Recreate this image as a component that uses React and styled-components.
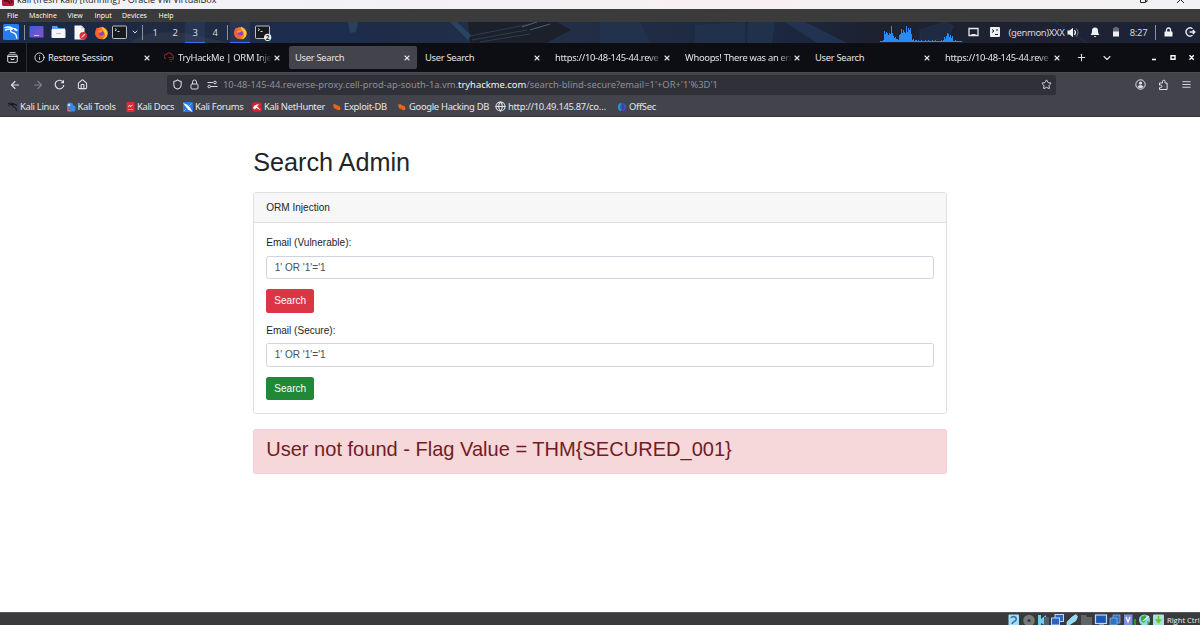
import styled, { createGlobalStyle } from 'styled-components'
import { LuInfo, LuX, LuArrowLeft, LuArrowRight, LuHouse, LuShield, LuStar, LuMenu, LuChevronDown, LuPlus, LuGlobe } from 'react-icons/lu'

const GlobalStyle = createGlobalStyle`
  * { box-sizing: border-box; }
  body {
    margin: 0;
    background: #fff;
    overflow: hidden;
  }
  svg { display: block; flex: none; }
`

const Desktop = styled.div`
  width: 1200px;
  height: 625px;
  display: flex;
  flex-direction: column;
  overflow: hidden;
  font-family: 'Noto Sans', sans-serif;
  font-size: 9px;
  white-space: nowrap;
`

/* Virtual machine window */

const TitleBar = styled.div`
  height: 9px;
  flex: none;
  display: flex;
  align-items: flex-start;
  overflow: hidden;
  padding-left: 2px;
  background: linear-gradient(90deg, #f0f3fa, #f7eff3 60%, #f3f1f5);
  color: #222;
`

const TitleText = styled.span`
  margin: -7px 0 0 3px;
  font-family: 'Open Sans', sans-serif;
  font-size: 9px;
  line-height: 14px;
`

const WindowControls = styled.svg`
  margin-left: auto;
`

const MenuBar = styled.div`
  height: 13px;
  flex: none;
  display: flex;
  background: #3b3b3b;
  color: #fff;
  font-family: 'Open Sans', sans-serif;
  font-size: 7px;
  line-height: 13px;
  padding-left: 7px;
`

const MenuItem = styled.span`
  width: ${(props) => props.$width}px;
`

const StatusBar = styled.div`
  height: 13px;
  flex: none;
  display: flex;
  justify-content: flex-end;
  background: #3a3a3d;
  color: #f2f2f2;
  font-family: 'Open Sans', sans-serif;
  font-size: 7.6px;
  line-height: 15px;
  border-top: 1px solid #55555a;
`

const HostKey = styled.span`
  width: 33px;
`

/* Xfce panel */

const Panel = styled.div`
  height: 21px;
  flex: none;
  display: flex;
  align-items: center;
  position: relative;
  background: #1e2436;
  color: #d3d7df;
`

const Wallpaper = styled.svg`
  position: absolute;
  inset: 0;
`

const PanelItem = styled.div`
  position: relative;
  width: ${(props) => props.$width}px;
  height: 21px;
  flex: none;
  display: flex;
  align-items: center;
  justify-content: center;
  background: ${(props) => (props.$active ? 'rgba(60, 85, 130, 0.25)' : 'transparent')};
  border-bottom: 1px solid ${(props) => (props.$active ? '#3575e8' : 'transparent')};
`

const PanelLine = styled.div`
  position: relative;
  width: 1px;
  height: 15px;
  flex: none;
  background: #8c909b;
`

const Spacer = styled.div`
  flex: 1;
`

const PanelText = styled.span`
  font-size: 9.5px;
  letter-spacing: ${(props) => props.$spacing || '-0.3px'};
`

/* Browser */

const TabStrip = styled.div`
  height: 29px;
  flex: none;
  display: flex;
  align-items: center;
  background: #0d0e13;
  color: #e4e4e8;
`

const TabOverview = styled.div`
  width: 27px;
  height: 29px;
  display: flex;
  align-items: center;
  padding-left: 7px;
  border-right: 1px solid #2b2c31;
  margin-right: 2px;
`

const Tab = styled.div`
  width: 128px;
  height: 23px;
  margin-right: 2px;
  flex: none;
  display: flex;
  align-items: center;
  padding: 0 6px 0 5px;
  border-radius: 2px;
  background: ${(props) => (props.$active ? '#42434b' : 'transparent')};
`

const TabIcon = styled.span`
  width: 13px;
  flex: none;
`

const TabLabel = styled.span`
  flex: 1;
  overflow: hidden;
  margin-right: 1px;
  padding-left: 1px;
  font-size: 9.4px;
  letter-spacing: -0.3px;
  mask-image: ${(props) => (props.$fade ? 'linear-gradient(90deg, #000 calc(100% - 14px), transparent)' : 'none')};
`

const TabAction = styled.div`
  width: ${(props) => props.$width}px;
  display: flex;
  justify-content: center;
`

const NavBar = styled.div`
  height: 26px;
  flex: none;
  display: flex;
  align-items: center;
  padding-bottom: 2px;
  background: #42434b;
  border-top: 1px solid #4a4b52;
  color: #e2e2e6;
`

const NavButton = styled.div`
  width: ${(props) => props.$width || 22.4}px;
  flex: none;
  display: flex;
  justify-content: center;
  opacity: ${(props) => (props.$disabled ? 0.4 : 1)};
`

const NavButtons = styled.div`
  width: 167px;
  padding-left: 4px;
  display: flex;
  align-items: center;
`

const AddressBar = styled.div`
  width: 889px;
  height: 20px;
  margin-right: 73px;
  flex: none;
  display: flex;
  align-items: center;
  padding: 0 4px 0 5px;
  background: #303138;
  border-radius: 2px;
`

const Address = styled.span`
  flex: 1;
  padding-left: 4px;
  color: #8e8e96;
  font-size: 9.4px;

  b {
    font-weight: 400;
    color: #f4f4f8;
  }
`

const Bookmarks = styled.div`
  height: 19px;
  flex: none;
  display: flex;
  align-items: center;
  padding: 0 0 1px 7px;
  background: #42434b;
  border-bottom: 1px solid #35363c;
  color: #e6e6ea;
`

const Bookmark = styled.div`
  width: ${(props) => props.$width}px;
  flex: none;
  display: flex;
  align-items: center;
  gap: 2px;
  font-size: 9.4px;
  letter-spacing: -0.3px;
`

/* Search page */

const Page = styled.main`
  flex: 1;
  width: 693.6px;
  margin: 0 auto;
  padding-top: 29.5px;
  font-family: 'Liberation Sans', Arial, sans-serif;
  font-size: 10.05px;
  line-height: 15px;
  color: #212529;
`

const PageTitle = styled.h1`
  margin: 0 0 15.5px;
  font-size: 25.2px;
  line-height: 30px;
  font-weight: 400;
`

const Card = styled.section`
  height: 221.5px;
  border: 1px solid #dfdfdf;
  border-radius: 2.5px;
`

const CardHeader = styled.div`
  height: 30px;
  padding: 7px 12px;
  background: #f7f7f7;
  border-bottom: 1px solid #dfdfdf;
`

const CardBody = styled.form`
  padding: 12px;
`

const Field = styled.div`
  margin-bottom: 10px;
`

const Label = styled.label`
  display: block;
  height: 16px;
  margin-bottom: 4.5px;
  line-height: 16.5px;
`

const Input = styled.input`
  display: block;
  width: 100%;
  height: 23.5px;
  padding: 0 7.5px;
  margin-bottom: 10px;
  border: 1px solid #ced4da;
  border-radius: 2.5px;
  color: #495057;
  font: inherit;
  outline: none;
`

const Button = styled.button`
  display: block;
  width: 48px;
  height: 23.5px;
  padding: 0;
  border: 0;
  border-radius: 2.5px;
  background: ${(props) => (props.$secure ? '#218838' : '#dc3545')};
  color: #fff;
  font: inherit;
`

const Alert = styled.div`
  height: 45px;
  margin-top: 15.5px;
  padding: 7px 12px 0;
  border: 1px solid #f4ced2;
  border-radius: 2.5px;
  background: #f6d7da;
  color: #721c24;

  h2 {
    margin: 0;
    font-size: 20.06px;
    line-height: 24px;
    font-weight: 400;
  }
`

const KaliDragon = ({ size, color = '#fff', bg = 'none' }) => (
  <svg width={size} height={size} viewBox="0 0 16 16" fill="none">
    <rect width="16" height="16" rx="1.5" fill={bg} />
    <path d="M2 3.600c2.600-.9 5.400-.7 7.400.7M2.400 6c2-1 4.500-1.200 6.600-.7M9 4.200c-2.400 1.800-1.600 4 1 4.400 2.400.4 3.400 2 3.800 5.400M10.200 4.400c1.600 0 2.600.5 3.600 2M11.600 5.600l2.400.6" stroke={color} strokeWidth="1.400" strokeLinecap="round" />
  </svg>
)

const Firefox = () => (
  <svg width="15" height="15" viewBox="0 0 16 16">
    <circle cx="8" cy="8.700" r="6.600" fill="#ff7a1c" />
    <path d="M9 1.200c.4 2 4 3 5 5.600 1.300 4-1 8-5 8.500 3-2 3.600-5 2-7.800C9.700 5.600 8 4 9 1.200z" fill="#ffc93b" />
    <path d="M2 4.600 3.300 2.600l1.200 1.700 2.700.3L5 8l1 4 4.500 1.700C6 16.400 1.500 13 1.400 9z" fill="#f9603a" />
    <circle cx="7.900" cy="8.800" r="2.700" fill="#8547b8" />
    <path d="M4.600 6.300c2-.9 3.500-.4 4.700.6L7 8l-2 .3z" fill="#ff9b2b" />
  </svg>
)

const Terminal = ({ count }) => (
  <svg width="18" height="17" viewBox="0 0 18 17">
    <rect x="1.500" y="2" width="14" height="12.500" rx=".8" fill="#17191d" stroke="#bcbfc4" />
    <path d="M4 4.500l1.500 1.200L4 7M6.500 7.500h2" stroke="#f5f5f5" fill="none" strokeWidth=".9" />
    {count && (
      <>
        <circle cx="13.700" cy="13.300" r="3.600" fill="#f3f3f5" />
        <text x="13.700" y="15.600" fontSize="6.500" fontWeight="700" textAnchor="middle" fill="#222">{count}</text>
      </>
    )}
  </svg>
)

const Desktops = () => (
  <svg width="15" height="12" viewBox="0 0 15 12">
    <defs>
      <linearGradient id="desk" x1="0" x2="1" y2="1">
        <stop stopColor="#3a5fd0" />
        <stop offset="1" stopColor="#8a50c8" />
      </linearGradient>
    </defs>
    <rect x=".5" width="14" height="11.500" rx=".8" fill="url(#desk)" />
    <path d="M5 9.500h5" stroke="#c9c4f4" />
  </svg>
)

const Folder = () => (
  <svg width="15" height="14" viewBox="0 0 15 14">
    <path d="M1 1h5l1.500 2H14v4H1z" fill="#5c9df0" />
    <rect x=".5" y="4" width="14" height="9" rx="1" fill="#f4f6fa" />
    <path d="M5 8.500h5" stroke="#b7bfcc" />
  </svg>
)

const TextDocument = () => (
  <svg width="15" height="15" viewBox="0 0 15 15">
    <path d="M1.500.5h7l3 3v11h-10z" fill="#f6f6f6" />
    <path d="M8.500.5v3h3" fill="#bfc3c9" />
    <circle cx="10.300" cy="10.800" r="3.800" fill="#d6303a" />
    <path d="M8.500 12.500l3.500-3.500" stroke="#f3c7c9" strokeWidth="1.100" />
  </svg>
)

// cpu history, one bar per sample
const samples = [1, 1, 1, 2, 11, 8, 10, 9, 7, 9, 8, 16, 9, 6, 4, 5, 3, 3, 2, 7, 8, 13, 9, 12, 10, 9, 16, 10, 14, 12, 14, 8, 2, 3, 1, 2, 2, 1, 2, 1, 1, 2, 1, 1, 1, 2, 1, 1, 2, 1, 1, 1, 2, 1, 1, 2, 1, 1, 1, 1, 1, 2, 1, 2, 5, 3, 6, 9, 8, 5, 7, 4, 6, 1, 1, 2, 1, 1, 1, 1, 1, 1]

const CpuGraph = () => (
  <svg width="84" height="20" viewBox="0 0 84 20" shapeRendering="crispEdges">
    {samples.map((value, i) => (
      <rect key={i} x={i} y={20 - value} width="1" height={value} fill="#268bf5" />
    ))}
  </svg>
)

const PanelWallpaper = () => (
  <Wallpaper width="1200" height="21" viewBox="0 0 1200 21">
    <defs>
      <linearGradient id="wall">
        <stop stopColor="#1c2743" />
        <stop offset=".15" stopColor="#202b43" />
        <stop offset=".3" stopColor="#1e2c49" />
        <stop offset=".45" stopColor="#222f47" />
        <stop offset=".65" stopColor="#1c2840" />
        <stop offset=".73" stopColor="#1d2130" />
        <stop offset="1" stopColor="#1d2337" />
      </linearGradient>
    </defs>
    <rect width="1200" height="21" fill="url(#wall)" />
    <path d="M0 0h145l-20 12L108 21H0z" fill="#1b2949" opacity=".6" />
    <path d="M130 21c10-10 30-12 55-10l45 10z" fill="#2b3447" />
    <path d="M275 0h75v10l22 11H262z" fill="#1c2d4e" />
    <path d="M348 0h10l-2 10-6 1z" fill="#355379" opacity=".5" />
    <path d="M468 0h89l14 8-25 13H470z" fill="#1b202b" />
    <path d="M450 0l18 18 3-5L457 0z" fill="#294363" />
    <path d="M470 14l60-12M472 18l55-10M480 20l50-8" stroke="#33455d" strokeWidth=".8" />
    <path d="M522 5l15-5M530 8l20-6" stroke="#4b6078" />
    <path d="M600 0h40l10 21h-50zM695 3l50-3v21h-50zM748 0h27l-3 21h-25z" fill="#243652" opacity=".65" />
    <path d="M785 0h20l42 21h-30z" fill="#233b5c" opacity=".65" />
    <path d="M920 8l25-8 8 4-5 12-28 4zM1055 0l32 21" fill="#1f3452" stroke="#2d405b" opacity=".5" />
  </Wallpaper>
)

const tabs = [
  { label: 'Restore Session', icon: <LuInfo size={11} /> },
  {
    label: 'TryHackMe | ORM Injec',
    fade: true,
    icon: (
      <svg width="11" height="11" viewBox="0 0 11 11">
        <path d="M2 6.500a2 2 0 0 1 .5-4A3 3 0 0 1 8 3a2 2 0 0 1 .5 3.700" fill="none" stroke="#8d1d26" strokeWidth="1.200" />
        <path d="M4 5.500h5M5 7.500h5M6 9.500h2" stroke="#6f1a22" />
      </svg>
    ),
  },
  { label: 'User Search', active: true },
  { label: 'User Search' },
  { label: 'https://10-48-145-44.reve', fade: true },
  { label: 'Whoops! There was an erro', fade: true },
  { label: 'User Search' },
  { label: 'https://10-48-145-44.reve', fade: true },
]

const ToolsIcon = () => (
  <svg width="10" height="10" viewBox="0 0 10 10">
    <circle cx="4" cy="3.800" r="3.200" fill="#4a80e8" />
    <circle cx="3" cy="3" r="1.300" fill="#c2dcff" />
    <rect x="4" y="3.500" width="5.500" height="6" rx="1.500" fill="#3c86ee" />
    <path d="M1 5.500l4.500 4H1.500z" fill="#ef6d67" />
  </svg>
)

const DocsIcon = () => (
  <svg width="9" height="10" viewBox="0 0 9 10">
    <rect x=".5" width="8" height="10" rx=".8" fill="#e12b33" />
    <path d="M2.500 5l1-2 1 1.500 2-1.500" stroke="#fff" fill="none" strokeWidth=".8" />
    <path d="M2 7.500h5" stroke="#f7a9ac" strokeWidth=".8" />
  </svg>
)

const ForumsIcon = () => (
  <svg width="10" height="10" viewBox="0 0 10 10">
    <rect width="10" height="10" rx=".6" fill="#2978df" />
    <path d="M0 1l4 1.500 3 3L9.500 10 5 7.500 3 5z" fill="#fff" />
    <path d="M8.500 1.500L6 4M3 7L1 9" stroke="#8fc0f7" strokeWidth=".8" />
  </svg>
)

const NetHunterIcon = () => (
  <svg width="10" height="10" viewBox="0 0 10 10">
    <rect x=".3" y=".3" width="9.400" height="9.400" rx="2" fill="#d8232e" />
    <path d="M1 6c1-3 3.500-4 6.500-3.500L5 4l4 4.500L4.500 6 2.500 7.500z" fill="#fff" />
  </svg>
)

const ExploitIcon = () => (
  <svg width="10" height="10" viewBox="0 0 10 10">
    <path d="M1 2.500l2.500-.3 1.700 1.300 2 .6 1.300 2-.5 2-2 .2-2-1.300L2 6z" fill="#f06a1d" />
    <path d="M2 3.500l5 4M5 3l-1 4M7 4L5.500 8" stroke="#d9550f" strokeWidth=".6" />
  </svg>
)

const OffSecIcon = () => (
  <svg width="10" height="10" viewBox="0 0 10 10">
    <path d="M4.500 1C1 .8-.2 5 2 8.500l2.500.5z" fill="#2791e6" />
    <path d="M5.500 1C9 .8 10.200 5 8 8.500L5.500 9z" fill="#434bd7" />
    <path d="M4 3L3.500 7M6 3l.5 4" stroke="#203b87" strokeWidth=".7" />
  </svg>
)

const bookmarks = [
  { label: 'Kali Linux', width: 58.5, icon: <KaliDragon size={11} color="#101114" /> },
  { label: 'Kali Tools', width: 60.5, icon: <ToolsIcon /> },
  { label: 'Kali Docs', width: 57, icon: <DocsIcon /> },
  { label: 'Kali Forums', width: 69, icon: <ForumsIcon /> },
  { label: 'Kali NetHunter', width: 80, icon: <NetHunterIcon /> },
  { label: 'Exploit-DB', width: 65, icon: <ExploitIcon /> },
  { label: 'Google Hacking DB', width: 98, icon: <ExploitIcon /> },
  { label: 'http://10.49.145.87/co…', width: 122, icon: <LuGlobe size={11} strokeWidth={2.2} /> },
  { label: 'OffSec', width: 50, icon: <OffSecIcon /> },
]

const StatusIcons = () => (
  <svg width="162" height="12" viewBox="1005 613 162 12">
    <rect x="1008.500" y="614.500" width="10.500" height="12" rx="1" fill="#a9dcf6" />
    <path d="M1011 618c2-3 6-1 5 2-1 2-3 1-4 4" stroke="#2b77b5" strokeWidth="1.600" fill="none" />
    <circle cx="1029" cy="620.500" r="5.700" fill="#77797b" />
    <circle cx="1029" cy="620.500" r="1.600" fill="#3a3a3d" />
    <path d="M1038 615h3v11h-3zM1041 619l5-4v11l-5-3z" fill="#73cdea" />
    <path d="M1044 617h5v8h-5z" fill="#516067" />
    <rect x="1055" y="614.500" width="8.500" height="7" fill="#2b64bc" stroke="#b9d7fa" />
    <rect x="1051.500" y="618" width="8" height="7" fill="#2b64bc" stroke="#b9d7fa" />
    <path d="M1067 622l5-5 4-2.500 1.500 2-1.500 4-6 4-3 .5z" fill="#8fdcf5" stroke="#d0f2ff" strokeWidth=".6" />
    <path d="M1081 615h5l1 2h5v9h-11z" fill="#626466" />
    <rect x="1095.500" y="615" width="11" height="8.500" fill="#1f56b5" stroke="#b5dcff" strokeWidth="1.200" />
    <path d="M1099 625h5" stroke="#b5dcff" />
    <path d="M1113 615h7v8h-7z" fill="#3371c7" stroke="#92bdf0" strokeWidth=".7" />
    <path d="M1110 618h7v7h-7z" fill="#3371c7" stroke="#92bdf0" strokeWidth=".7" />
    <rect x="1124" y="614.500" width="8.500" height="12" fill="#7e8fe0" />
    <path d="M1126 617l2 5 2-5" stroke="#fff" fill="none" strokeWidth="1.200" />
    <path d="M1135 619v6" stroke="#22b72e" strokeWidth="1.600" />
    <circle cx="1144.500" cy="620" r="5.500" fill="#8fd9e8" />
    <path d="M1141 617l4-2 2 3-3 5-3-2zM1147 621l3 1-2 4z" fill="#39a63e" />
    <path d="M1143 621l6-5" stroke="#efffff" strokeWidth="1.200" />
    <rect x="1153" y="614.500" width="11" height="12" rx="1" fill="#a8e3d8" />
    <path d="M1158.500 616v5M1156.500 620h4l-2 2.500z" stroke="#6cc03f" strokeWidth="1.500" fill="#6cc03f" />
  </svg>
)

const VmTitle = () => (
  <>
    <TitleBar>
      <svg width="12" height="6" viewBox="0 0 12 6">
        <path d="M0 0h12v5l-1 1H1L0 5z" fill="#ba1736" />
        <path d="M2 1c3-1 5 0 6 3M9 0l1 3" stroke="#4b0d1d" fill="none" strokeWidth="1.500" />
      </svg>
      <TitleText>kali (fresh kali) [Running] - Oracle VM VirtualBox</TitleText>
      <WindowControls width="62" height="5" viewBox="0 0 62 5" fill="none" stroke="#222">
        <path d="M2.500 0v2.500h5V0M7.500 1.500h1.500V0M39 3l3.500-3.500L46 3" />
      </WindowControls>
    </TitleBar>
    <MenuBar>
      <MenuItem $width={22}>File</MenuItem>
      <MenuItem $width={38.5}>Machine</MenuItem>
      <MenuItem $width={27}>View</MenuItem>
      <MenuItem $width={27.5}>Input</MenuItem>
      <MenuItem $width={36.5}>Devices</MenuItem>
      <MenuItem $width={30}>Help</MenuItem>
    </MenuBar>
  </>
)

const DesktopPanel = () => (
  <Panel>
    <PanelWallpaper />
    <PanelItem $width={21}><KaliDragon size={16} bg="#247cf0" /></PanelItem>
    <PanelItem $width={3} />
    <PanelLine />
    <PanelItem $width={23}><Desktops /></PanelItem>
    <PanelItem $width={21}><Folder /></PanelItem>
    <PanelItem $width={23}><TextDocument /></PanelItem>
    <PanelItem $width={18}><Firefox /></PanelItem>
    <PanelItem $width={20}><Terminal /></PanelItem>
    <PanelItem $width={9}><LuChevronDown size={8} strokeWidth={3} /></PanelItem>
    <PanelItem $width={3} />
    <PanelLine />
    <PanelItem $width={2} />
    <PanelItem $width={20}><PanelText>1</PanelText></PanelItem>
    <PanelItem $width={20}><PanelText>2</PanelText></PanelItem>
    <PanelItem $width={20} $active><PanelText>3</PanelText></PanelItem>
    <PanelItem $width={20}><PanelText>4</PanelText></PanelItem>
    <PanelItem $width={2} />
    <PanelLine />
    <PanelItem $width={2} />
    <PanelItem $width={20} $active><Firefox /></PanelItem>
    <PanelItem $width={25}><Terminal count={2} /></PanelItem>
    <Spacer />
    <PanelItem $width={84}><CpuGraph /></PanelItem>
    <PanelItem $width={18}>
      <svg width="11" height="10" viewBox="0 0 11 10">
        <path d="M1 1.500h9v7H1z" fill="none" stroke="#e7e9ed" strokeWidth="1.300" />
        <path d="M3.500 7.500h4" stroke="#e7e9ed" />
      </svg>
    </PanelItem>
    <PanelItem $width={26}>
      <svg width="10" height="10" viewBox="0 0 10 10">
        <rect width="10" height="10" rx="1" fill="#eceef1" />
        <path d="M2 2.500l2 1.500-2 1.500M5 7.500h3M6 3h2" stroke="#20242f" fill="none" />
      </svg>
    </PanelItem>
    <PanelItem $width={57}><PanelText $spacing="-0.38px">(genmon)XXX</PanelText></PanelItem>
    <PanelItem $width={16}>
      <svg width="12" height="11" viewBox="0 0 12 11">
        <path d="M.5 3.500h2L6 .8v9.400L2.500 7.500h-2z" fill="#f1f2f4" />
        <path d="M7.500 3c1.200 1.500 1.200 3.500 0 5" stroke="#f1f2f4" strokeWidth="1.200" fill="none" />
        <path d="M9.300 1.500c2.200 2.500 2.200 5.500 0 8" stroke="#8c919d" fill="none" />
      </svg>
    </PanelItem>
    <PanelItem $width={27}>
      <svg width="10" height="11" viewBox="0 0 10 11">
        <path d="M5 .5c-2.300 0-3 1.700-3 3.300C2 6 1.500 7 .5 8h9C8.500 7 8 6 8 3.800 8 2.200 7.300.5 5 .5zM3.700 9h2.600L5 10.300z" fill="#f1f2f4" />
      </svg>
    </PanelItem>
    <PanelItem $width={15}>
      <svg width="8" height="10" viewBox="0 0 8 10">
        <path d="M2.500 0h3v1H7v4H1V1h1.500z" fill="#656a76" />
        <path d="M1 4.500h6V9.500H1z" fill="#eceef1" />
      </svg>
    </PanelItem>
    <PanelItem $width={31}><PanelText>8:27</PanelText></PanelItem>
    <PanelItem $width={1} />
    <PanelLine />
    <PanelItem $width={25}>
      <svg width="9" height="10" viewBox="0 0 9 10">
        <path d="M2.500 5V3a2 2 0 0 1 4 0v2" stroke="#f1f2f4" strokeWidth="1.300" fill="none" />
        <rect x=".5" y="4.500" width="8" height="5" rx=".6" fill="#f1f2f4" />
      </svg>
    </PanelItem>
    <PanelItem $width={18}>
      <svg width="11" height="10" viewBox="0 0 11 10">
        <path d="M7.500 1.800a4 4 0 1 0 0 6.400M4.500 5h5M7.800 3l2 2-2 2" fill="none" stroke="#e9eaed" strokeWidth="1.400" />
      </svg>
    </PanelItem>
    <PanelItem $width={1} />
  </Panel>
)

const Browser = () => (
  <>
    <TabStrip>
      <TabOverview>
        <svg width="11" height="11" viewBox="0 0 11 11" fill="none" stroke="#dcdce0">
          <path d="M2.500.7h6" />
          <rect x=".7" y="2.800" width="9.600" height="7.500" rx="1.200" />
          <path d="M.7 4.500h9.600M4 6.200v1.300h3V6.200" />
        </svg>
      </TabOverview>
      {tabs.map(({ label, icon, active, fade }, i) => (
        <Tab key={i} $active={active}>
          {icon && <TabIcon>{icon}</TabIcon>}
          <TabLabel $fade={fade}>{label}</TabLabel>
          <LuX size={8} strokeWidth={3.2} />
        </Tab>
      ))}
      <TabAction $width={25}><LuPlus size={11} strokeWidth={2.2} /></TabAction>
      <TabAction $width={26}><LuChevronDown size={12} strokeWidth={2.2} /></TabAction>
      <Spacer />
      <TabAction $width={80}>
        <svg width="80" height="9" viewBox="0 0 80 9" fill="none" stroke="#fff" strokeWidth="1.400">
          <path d="M32 6.500h4M51 2.800h4v3.500h-4zM69.500 2.200l4.200 4.500M73.700 2.200l-4.200 4.500" />
        </svg>
      </TabAction>
    </TabStrip>
    <NavBar>
      <NavButtons>
        <NavButton><LuArrowLeft size={12} strokeWidth={2.2} /></NavButton>
        <NavButton $disabled><LuArrowRight size={12} strokeWidth={2.2} /></NavButton>
        <NavButton>
          <svg width="11" height="11" viewBox="0 0 11 11">
            <path d="M9.200 3.300a4.300 4.300 0 1 0 .6 2.700" fill="none" stroke="#e2e2e6" strokeWidth="1.200" />
            <path d="M10 .8v3.500H6.500z" fill="#e2e2e6" />
          </svg>
        </NavButton>
        <NavButton><LuHouse size={11} strokeWidth={2.3} /></NavButton>
      </NavButtons>
      <AddressBar>
        <NavButton $width={10}><LuShield size={11} strokeWidth={2.2} /></NavButton>
        <NavButton $width={24}>
          <svg width="9" height="11" viewBox="0 0 9 11" fill="none" stroke="#d8d8dd">
            <path d="M2.500 5V3a2 2 0 0 1 4 0v2" />
            <rect x="1" y="5" width="7" height="5" rx="1" />
          </svg>
        </NavButton>
        <NavButton $width={13}>
          <svg width="11" height="9" viewBox="0 0 11 9" fill="none" stroke="#d8d8dd">
            <path d="M.5 2.500H6M3.500 6.500h7" />
            <circle cx="8" cy="2.500" r="1.300" />
            <circle cx="2.200" cy="6.500" r="1.300" />
          </svg>
        </NavButton>
        <Address>
          10-48-145-44.reverse-proxy.cell-prod-ap-south-1a.vm.<b>tryhackme.com</b>/search-blind-secure?email=1'+OR+'1'%3D'1
        </Address>
        <LuStar size={11} strokeWidth={2} />
      </AddressBar>
      <NavButton $width={23}>
        <svg width="11" height="11" viewBox="0 0 11 11">
          <circle cx="5.500" cy="5.500" r="4.700" fill="none" stroke="#e2e2e6" />
          <circle cx="5.500" cy="4.100" r="1.600" fill="#e2e2e6" />
          <path d="M2.500 8c.5-2.200 5.500-2.200 6 0-1.500 1.500-4.500 1.500-6 0z" fill="#e2e2e6" />
        </svg>
      </NavButton>
      <NavButton $width={23}>
        <svg width="11" height="12" viewBox="0 0 11 12">
          <path d="M1.500 4h3V2.500a1.300 1.300 0 0 1 2.600 0V4h2v6.500H1.500V8.600h1.200a1.200 1.200 0 0 0 0-2.400H1.500z" fill="none" stroke="#e2e2e6" strokeLinejoin="round" />
        </svg>
      </NavButton>
      <NavButton $width={22}><LuMenu size={11} strokeWidth={2} /></NavButton>
    </NavBar>
    <Bookmarks>
      {bookmarks.map(({ label, width, icon }) => (
        <Bookmark key={label} $width={width}>
          {icon}
          {label}
        </Bookmark>
      ))}
    </Bookmarks>
  </>
)

const SearchAdmin = () => (
  <Page>
    <PageTitle>Search Admin</PageTitle>
    <Card>
      <CardHeader>ORM Injection</CardHeader>
      <CardBody>
        <Field>
          <Label>Email (Vulnerable):</Label>
          <Input defaultValue="1' OR '1'='1" />
          <Button type="button">Search</Button>
        </Field>
        <Field>
          <Label>Email (Secure):</Label>
          <Input defaultValue="1' OR '1'='1" />
          <Button type="button" $secure>Search</Button>
        </Field>
      </CardBody>
    </Card>
    <Alert>
      <h2>User not found - Flag Value = THM&#123;SECURED_001&#125;</h2>
    </Alert>
  </Page>
)

export default function App() {
  return (
    <Desktop>
      <GlobalStyle />
      <VmTitle />
      <DesktopPanel />
      <Browser />
      <SearchAdmin />
      <StatusBar>
        <StatusIcons />
        <HostKey>Right Ctrl</HostKey>
      </StatusBar>
    </Desktop>
  )
}
